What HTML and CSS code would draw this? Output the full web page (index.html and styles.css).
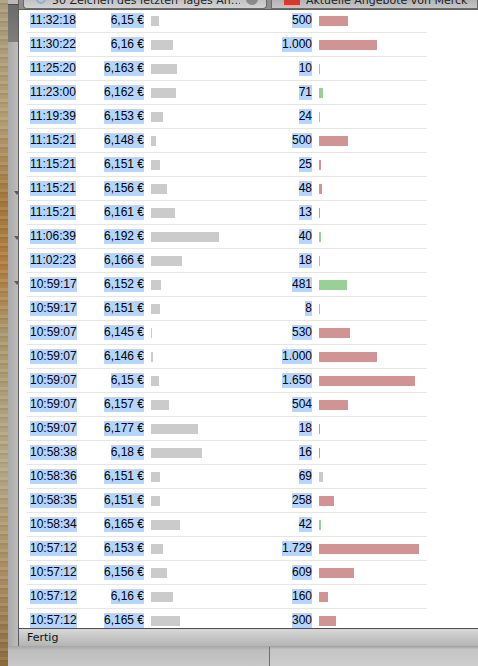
FILE: index.html
```html
<!DOCTYPE html>
<html lang="de">
<head>
<meta charset="utf-8">
<title>Trades</title>
<link rel="stylesheet" href="styles.css">
</head>
<body>
<div class="screen">
  <div class="desktop"></div>
  <div class="backwin">
    <div class="backwin-top"></div>
    <div class="backwin-bar"></div>
    <div class="backwin-body">
      <span class="mark"></span>
      <span class="mark"></span>
      <span class="mark"></span>
    </div>
  </div>
  <div class="window">
    <div class="tabbar">
      <div class="tab tab-active">
        <span class="fav-circle"></span>
        <span class="tab-title">50 Zeichen des letzten Tages An…</span>
        <span class="tab-close"></span>
      </div>
      <div class="tab">
        <span class="fav-red"></span>
        <span class="tab-title">Aktuelle Angebote von Merck</span>
      </div>
    </div>
    <div class="content">
      <div class="table">
        <div class="row"><span class="c-time"><span class="sel">11:32:18</span></span><span class="c-price"><span class="sel">6,15 €</span></span><span class="c-pbar"><span class="bar gray" style="width:8px"></span></span><span class="c-vol"><span class="sel">500</span></span><span class="c-vbar"><span class="bar red" style="width:29px"></span></span></div>
        <div class="row"><span class="c-time"><span class="sel">11:30:22</span></span><span class="c-price"><span class="sel">6,16 €</span></span><span class="c-pbar"><span class="bar gray" style="width:22px"></span></span><span class="c-vol"><span class="sel">1.000</span></span><span class="c-vbar"><span class="bar red" style="width:58px"></span></span></div>
        <div class="row"><span class="c-time"><span class="sel">11:25:20</span></span><span class="c-price"><span class="sel">6,163 €</span></span><span class="c-pbar"><span class="bar gray" style="width:26px"></span></span><span class="c-vol"><span class="sel">10</span></span><span class="c-vbar"><span class="bar green" style="width:1px"></span></span></div>
        <div class="row"><span class="c-time"><span class="sel">11:23:00</span></span><span class="c-price"><span class="sel">6,162 €</span></span><span class="c-pbar"><span class="bar gray" style="width:25px"></span></span><span class="c-vol"><span class="sel">71</span></span><span class="c-vbar"><span class="bar green" style="width:4px"></span></span></div>
        <div class="row"><span class="c-time"><span class="sel">11:19:39</span></span><span class="c-price"><span class="sel">6,153 €</span></span><span class="c-pbar"><span class="bar gray" style="width:12px"></span></span><span class="c-vol"><span class="sel">24</span></span><span class="c-vbar"><span class="bar green" style="width:1px"></span></span></div>
        <div class="row"><span class="c-time"><span class="sel">11:15:21</span></span><span class="c-price"><span class="sel">6,148 €</span></span><span class="c-pbar"><span class="bar gray" style="width:5px"></span></span><span class="c-vol"><span class="sel">500</span></span><span class="c-vbar"><span class="bar red" style="width:29px"></span></span></div>
        <div class="row"><span class="c-time"><span class="sel">11:15:21</span></span><span class="c-price"><span class="sel">6,151 €</span></span><span class="c-pbar"><span class="bar gray" style="width:9px"></span></span><span class="c-vol"><span class="sel">25</span></span><span class="c-vbar"><span class="bar red" style="width:2px"></span></span></div>
        <div class="row"><span class="c-time"><span class="sel">11:15:21</span></span><span class="c-price"><span class="sel">6,156 €</span></span><span class="c-pbar"><span class="bar gray" style="width:16px"></span></span><span class="c-vol"><span class="sel">48</span></span><span class="c-vbar"><span class="bar red" style="width:3px"></span></span></div>
        <div class="row"><span class="c-time"><span class="sel">11:15:21</span></span><span class="c-price"><span class="sel">6,161 €</span></span><span class="c-pbar"><span class="bar gray" style="width:24px"></span></span><span class="c-vol"><span class="sel">13</span></span><span class="c-vbar"><span class="bar red" style="width:1px"></span></span></div>
        <div class="row"><span class="c-time"><span class="sel">11:06:39</span></span><span class="c-price"><span class="sel">6,192 €</span></span><span class="c-pbar"><span class="bar gray" style="width:68px"></span></span><span class="c-vol"><span class="sel">40</span></span><span class="c-vbar"><span class="bar green" style="width:2px"></span></span></div>
        <div class="row"><span class="c-time"><span class="sel">11:02:23</span></span><span class="c-price"><span class="sel">6,166 €</span></span><span class="c-pbar"><span class="bar gray" style="width:31px"></span></span><span class="c-vol"><span class="sel">18</span></span><span class="c-vbar"><span class="bar green" style="width:1px"></span></span></div>
        <div class="row"><span class="c-time"><span class="sel">10:59:17</span></span><span class="c-price"><span class="sel">6,152 €</span></span><span class="c-pbar"><span class="bar gray" style="width:10px"></span></span><span class="c-vol"><span class="sel">481</span></span><span class="c-vbar"><span class="bar green" style="width:28px"></span></span></div>
        <div class="row"><span class="c-time"><span class="sel">10:59:17</span></span><span class="c-price"><span class="sel">6,151 €</span></span><span class="c-pbar"><span class="bar gray" style="width:9px"></span></span><span class="c-vol"><span class="sel">8</span></span><span class="c-vbar"><span class="bar green" style="width:1px"></span></span></div>
        <div class="row"><span class="c-time"><span class="sel">10:59:07</span></span><span class="c-price"><span class="sel">6,145 €</span></span><span class="c-pbar"><span class="bar gray" style="width:1px"></span></span><span class="c-vol"><span class="sel">530</span></span><span class="c-vbar"><span class="bar red" style="width:31px"></span></span></div>
        <div class="row"><span class="c-time"><span class="sel">10:59:07</span></span><span class="c-price"><span class="sel">6,146 €</span></span><span class="c-pbar"><span class="bar gray" style="width:2px"></span></span><span class="c-vol"><span class="sel">1.000</span></span><span class="c-vbar"><span class="bar red" style="width:58px"></span></span></div>
        <div class="row"><span class="c-time"><span class="sel">10:59:07</span></span><span class="c-price"><span class="sel">6,15 €</span></span><span class="c-pbar"><span class="bar gray" style="width:8px"></span></span><span class="c-vol"><span class="sel">1.650</span></span><span class="c-vbar"><span class="bar red" style="width:96px"></span></span></div>
        <div class="row"><span class="c-time"><span class="sel">10:59:07</span></span><span class="c-price"><span class="sel">6,157 €</span></span><span class="c-pbar"><span class="bar gray" style="width:18px"></span></span><span class="c-vol"><span class="sel">504</span></span><span class="c-vbar"><span class="bar red" style="width:29px"></span></span></div>
        <div class="row"><span class="c-time"><span class="sel">10:59:07</span></span><span class="c-price"><span class="sel">6,177 €</span></span><span class="c-pbar"><span class="bar gray" style="width:47px"></span></span><span class="c-vol"><span class="sel">18</span></span><span class="c-vbar"><span class="bar red" style="width:1px"></span></span></div>
        <div class="row"><span class="c-time"><span class="sel">10:58:38</span></span><span class="c-price"><span class="sel">6,18 €</span></span><span class="c-pbar"><span class="bar gray" style="width:51px"></span></span><span class="c-vol"><span class="sel">16</span></span><span class="c-vbar"><span class="bar red" style="width:1px"></span></span></div>
        <div class="row"><span class="c-time"><span class="sel">10:58:36</span></span><span class="c-price"><span class="sel">6,151 €</span></span><span class="c-pbar"><span class="bar gray" style="width:9px"></span></span><span class="c-vol"><span class="sel">69</span></span><span class="c-vbar"><span class="bar gray" style="width:4px"></span></span></div>
        <div class="row"><span class="c-time"><span class="sel">10:58:35</span></span><span class="c-price"><span class="sel">6,151 €</span></span><span class="c-pbar"><span class="bar gray" style="width:9px"></span></span><span class="c-vol"><span class="sel">258</span></span><span class="c-vbar"><span class="bar red" style="width:15px"></span></span></div>
        <div class="row"><span class="c-time"><span class="sel">10:58:34</span></span><span class="c-price"><span class="sel">6,165 €</span></span><span class="c-pbar"><span class="bar gray" style="width:29px"></span></span><span class="c-vol"><span class="sel">42</span></span><span class="c-vbar"><span class="bar green" style="width:2px"></span></span></div>
        <div class="row"><span class="c-time"><span class="sel">10:57:12</span></span><span class="c-price"><span class="sel">6,153 €</span></span><span class="c-pbar"><span class="bar gray" style="width:12px"></span></span><span class="c-vol"><span class="sel">1.729</span></span><span class="c-vbar"><span class="bar red" style="width:100px"></span></span></div>
        <div class="row"><span class="c-time"><span class="sel">10:57:12</span></span><span class="c-price"><span class="sel">6,156 €</span></span><span class="c-pbar"><span class="bar gray" style="width:16px"></span></span><span class="c-vol"><span class="sel">609</span></span><span class="c-vbar"><span class="bar red" style="width:35px"></span></span></div>
        <div class="row"><span class="c-time"><span class="sel">10:57:12</span></span><span class="c-price"><span class="sel">6,16 €</span></span><span class="c-pbar"><span class="bar gray" style="width:22px"></span></span><span class="c-vol"><span class="sel">160</span></span><span class="c-vbar"><span class="bar red" style="width:9px"></span></span></div>
        <div class="row"><span class="c-time"><span class="sel">10:57:12</span></span><span class="c-price"><span class="sel">6,165 €</span></span><span class="c-pbar"><span class="bar gray" style="width:29px"></span></span><span class="c-vol"><span class="sel">300</span></span><span class="c-vbar"><span class="bar red" style="width:17px"></span></span></div>
      </div>
    </div>
    <div class="statusbar"><span class="status-text">Fertig</span></div>
  </div>
  <div class="below">
    <div class="below-left"></div>
    <div class="below-right"></div>
  </div>
</div>
</body>
</html>
```

FILE: styles.css
```css
* { box-sizing: border-box; }
html, body { margin: 0; padding: 0; }
body {
  width: 478px;
  height: 666px;
  overflow: hidden;
  font-family: "Liberation Sans", Arial, sans-serif;
  background: #b8b8b8;
}
.screen {
  display: grid;
  grid-template-columns: 8px 10px 1fr;
  grid-template-rows: 646px 20px;
  width: 478px;
  height: 666px;
}
.desktop {
  grid-column: 1;
  grid-row: 1 / 3;
  background:
    repeating-linear-gradient(180deg, rgba(255,255,255,0.10) 0 3px, rgba(0,0,0,0.06) 3px 5px, rgba(255,255,255,0) 5px 9px),
    linear-gradient(180deg, #a89a7a 0%, #b29c72 18%, #a2773c 30%, #b07c3e 40%, #a8956c 50%, #b4a684 70%, #a68a5c 88%, #8c6a3c 100%);
}
.backwin {
  grid-column: 2;
  grid-row: 1;
  display: flex;
  flex-direction: column;
}
.backwin-top { height: 4px; background: #b9b9b9; }
.backwin-bar { height: 38px; background: linear-gradient(180deg, #6b6b6b, #7e7e7e); border-top: 1px solid #5a4a4a; }
.backwin-body {
  flex: 1;
  background: linear-gradient(90deg, #a9a9a9, #bdbdbd);
  display: flex;
  flex-direction: column;
  align-items: flex-end;
  padding-top: 149px;
  gap: 41px;
}
.mark {
  width: 0; height: 0;
  border-left: 3px solid transparent;
  border-right: 3px solid transparent;
  border-top: 4px solid #5e5e5e;
  margin-right: -2px;
}
.window {
  grid-column: 3;
  grid-row: 1;
  display: flex;
  flex-direction: column;
  border-left: 1px solid #5c5c5c;
  min-width: 0;
}
.tabbar {
  height: 10px;
  flex: none;
  display: flex;
  align-items: flex-end;
  background: #8d8d8d;
  border-bottom: 1px solid #606060;
  padding-left: 4px;
  gap: 4px;
  overflow: hidden;
}
.tab {
  height: 10px;
  display: flex;
  align-items: flex-end;
  gap: 6px;
  padding: 0 8px 3px 12px;
  background: linear-gradient(180deg, #b0b0b0, #c6c6c6);
  border: 1px solid #6a6a6a;
  border-top: none;
  border-radius: 0 0 0 0;
  width: 208px;
  overflow: hidden;
  position: relative;
}
.tab-active {
  width: 245px;
  background: linear-gradient(180deg, #c0c0c0, #d3d3d3);
  border-radius: 0 0 4px 4px;
}
.tab-title {
  font-family: "DejaVu Sans", "Lucida Grande", sans-serif;
  font-size: 11px;
  line-height: 12px;
  color: #1e1e1e;
  white-space: nowrap;
  flex: 1;
  overflow: hidden;
  margin-bottom: -2px;
}
.fav-circle {
  flex: none;
  width: 10px;
  height: 10px;
  border-radius: 50%;
  border: 2px solid #8fb1cf;
  margin-bottom: 1px;
}
.fav-red {
  flex: none;
  width: 16px;
  height: 8px;
  background: #d23a32;
  margin-bottom: 0;
}
.tab-close {
  flex: none;
  width: 12px;
  height: 12px;
  border-radius: 50%;
  background: #8a8a8a;
  margin-bottom: 0;
}
.content {
  flex: 1;
  background: #ffffff;
  overflow: hidden;
  padding-left: 8px;
}
.table {
  width: 400px;
  margin-top: -1px;
  display: flex;
  flex-direction: column;
}
.row {
  display: grid;
  grid-template-columns: 70px 50px 128px 40px 112px;
  height: 24px;
  align-items: center;
  border-bottom: 1px solid #e6e6e6;
  font-size: 12px;
  color: #000;
}
.sel {
  background: #b5d5ff;
  line-height: 15px;
  display: inline-block;
  white-space: nowrap;
}
.c-time { padding-left: 3px; }
.c-price { text-align: right; padding-right: 3px; }
.c-pbar { padding-left: 4px; display: flex; align-items: center; }
.c-vol { text-align: right; padding-right: 3px; }
.c-vbar { padding-left: 4px; display: flex; align-items: center; }
.bar { display: block; height: 10px; }
.bar.gray { background: #cbcbcb; }
.bar.red { background: #d09494; }
.bar.green { background: #98d096; }
.statusbar {
  height: 18px;
  flex: none;
  border-top: 1px solid #4e4e4e;
  background: linear-gradient(180deg, #d8d8d8 0%, #c2c2c2 60%, #b4b4b4 100%);
  display: flex;
  align-items: center;
  padding-left: 8px;
}
.status-text {
  font-family: "DejaVu Sans", "Lucida Grande", sans-serif;
  font-size: 11px;
  color: #111;
  line-height: 14px;
}
.below {
  grid-column: 2 / 4;
  grid-row: 2;
  display: flex;
  background: linear-gradient(180deg, #9a9a9a 0px, #c4c4c4 3px, #cdcdcd 100%);
}
.below-left { width: 261px; background: linear-gradient(180deg, #a5a5a5 0px, #bdbdbd 4px, #c8c8c8 100%); }
.below-right { flex: 1; border-left: 1px solid #6e6e6e; margin-top: 1px; }
```
